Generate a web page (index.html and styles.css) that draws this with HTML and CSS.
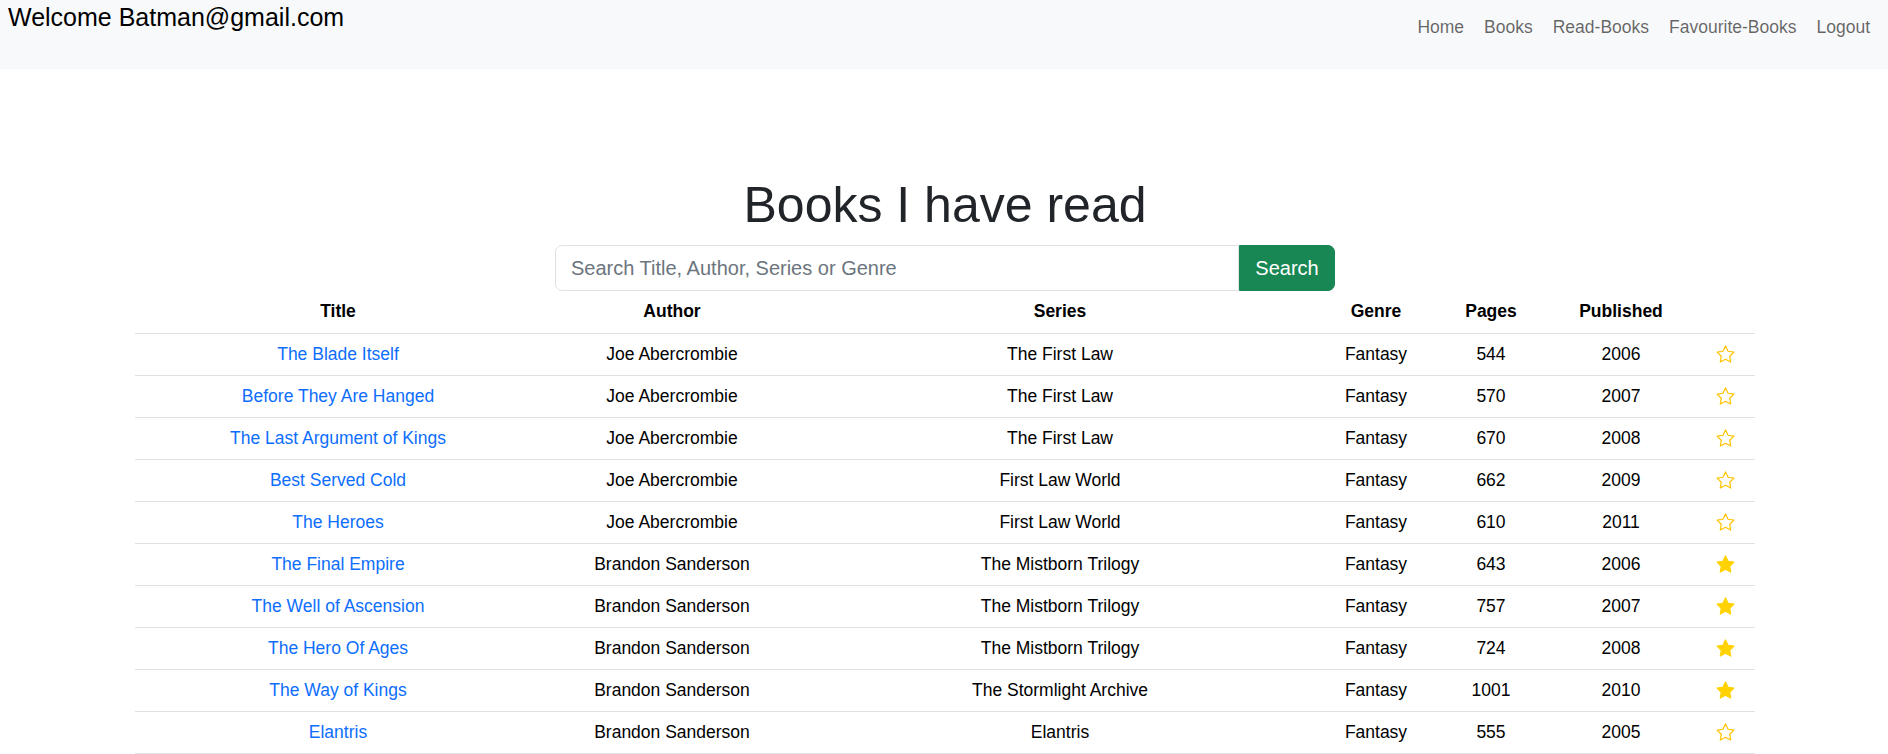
FILE: index.html
```html
<!DOCTYPE html>
<html lang="en">
<head>
<meta charset="utf-8">
<title>Books I have read</title>
<link rel="stylesheet" href="styles.css">
</head>
<body>
<svg width="0" height="0" class="defs" aria-hidden="true">
  <defs>
    <path id="star" d="M12 2.2l2.95 6.1 6.65.95-4.8 4.7 1.13 6.65L12 17.45l-5.930 3.15 1.13-6.65-4.8-4.7 6.65-.95z"/>
  </defs>
</svg>
<nav class="navbar">
  <div class="brand">Welcome Batman@gmail.com</div>
  <ul class="nav">
    <li><a href="#">Home</a></li>
    <li><a href="#">Books</a></li>
    <li><a href="#">Read-Books</a></li>
    <li><a href="#">Favourite-Books</a></li>
    <li><a href="#">Logout</a></li>
  </ul>
</nav>
<main class="main">
  <h1 class="title">Books I have read</h1>
  <form class="search">
    <input class="search-input" type="text" placeholder="Search Title, Author, Series or Genre">
    <button class="search-btn" type="button">Search</button>
  </form>
  <table class="books">
    <colgroup>
      <col class="c-title"><col class="c-author"><col class="c-series"><col class="c-genre"><col class="c-pages"><col class="c-pub"><col class="c-fav">
    </colgroup>
    <thead>
      <tr><th>Title</th><th>Author</th><th>Series</th><th>Genre</th><th>Pages</th><th>Published</th><th></th></tr>
    </thead>
    <tbody>
      <tr><td><a href="#">The Blade Itself</a></td><td>Joe Abercrombie</td><td>The First Law</td><td>Fantasy</td><td>544</td><td>2006</td><td><svg class="star" viewBox="0 0 24 24"><use href="#star"/></svg></td></tr>
      <tr><td><a href="#">Before They Are Hanged</a></td><td>Joe Abercrombie</td><td>The First Law</td><td>Fantasy</td><td>570</td><td>2007</td><td><svg class="star" viewBox="0 0 24 24"><use href="#star"/></svg></td></tr>
      <tr><td><a href="#">The Last Argument of Kings</a></td><td>Joe Abercrombie</td><td>The First Law</td><td>Fantasy</td><td>670</td><td>2008</td><td><svg class="star" viewBox="0 0 24 24"><use href="#star"/></svg></td></tr>
      <tr><td><a href="#">Best Served Cold</a></td><td>Joe Abercrombie</td><td>First Law World</td><td>Fantasy</td><td>662</td><td>2009</td><td><svg class="star" viewBox="0 0 24 24"><use href="#star"/></svg></td></tr>
      <tr><td><a href="#">The Heroes</a></td><td>Joe Abercrombie</td><td>First Law World</td><td>Fantasy</td><td>610</td><td>2011</td><td><svg class="star" viewBox="0 0 24 24"><use href="#star"/></svg></td></tr>
      <tr><td><a href="#">The Final Empire</a></td><td>Brandon Sanderson</td><td>The Mistborn Trilogy</td><td>Fantasy</td><td>643</td><td>2006</td><td><svg class="star filled" viewBox="0 0 24 24"><use href="#star"/></svg></td></tr>
      <tr><td><a href="#">The Well of Ascension</a></td><td>Brandon Sanderson</td><td>The Mistborn Trilogy</td><td>Fantasy</td><td>757</td><td>2007</td><td><svg class="star filled" viewBox="0 0 24 24"><use href="#star"/></svg></td></tr>
      <tr><td><a href="#">The Hero Of Ages</a></td><td>Brandon Sanderson</td><td>The Mistborn Trilogy</td><td>Fantasy</td><td>724</td><td>2008</td><td><svg class="star filled" viewBox="0 0 24 24"><use href="#star"/></svg></td></tr>
      <tr><td><a href="#">The Way of Kings</a></td><td>Brandon Sanderson</td><td>The Stormlight Archive</td><td>Fantasy</td><td>1001</td><td>2010</td><td><svg class="star filled" viewBox="0 0 24 24"><use href="#star"/></svg></td></tr>
      <tr><td><a href="#">Elantris</a></td><td>Brandon Sanderson</td><td>Elantris</td><td>Fantasy</td><td>555</td><td>2005</td><td><svg class="star" viewBox="0 0 24 24"><use href="#star"/></svg></td></tr>
    </tbody>
  </table>
</main>
</body>
</html>
```

FILE: styles.css
```css
* { box-sizing: border-box; }

html, body {
  margin: 0;
  padding: 0;
  background: #fff;
  font-family: "Liberation Sans", Arial, sans-serif;
  color: #212529;
}

.defs { position: absolute; width: 0; height: 0; }

.navbar {
  height: 69px;
  background: #f8f9fa;
  display: flex;
  justify-content: space-between;
  align-items: flex-start;
  padding: 0 8px;
}

.brand {
  font-size: 25px;
  line-height: 30px;
  color: #000;
  padding-top: 2px;
}

.nav {
  list-style: none;
  margin: 0;
  padding: 14px 0 0 0;
  display: flex;
}

.nav a {
  display: block;
  padding: 0 10px;
  font-size: 17.5px;
  line-height: 26px;
  color: rgba(0, 0, 0, 0.6);
  text-decoration: none;
}

.main {
  display: flex;
  flex-direction: column;
  align-items: center;
  padding-top: 106px;
  padding-left: 2px;
}

.title {
  margin: 0 0 10px 0;
  font-size: 50px;
  line-height: 60px;
  font-weight: 400;
  color: #212529;
}

.search {
  display: flex;
  width: 780px;
  height: 46px;
}

.search-input {
  flex: 1;
  height: 46px;
  border: 1px solid #dee2e6;
  border-radius: 7px 0 0 7px;
  padding: 0 15px;
  font-family: inherit;
  font-size: 20px;
  color: #212529;
  background: #fff;
  outline: none;
}

.search-input::placeholder { color: #6c757d; }

.search-btn {
  width: 96px;
  height: 46px;
  border: 1px solid #198754;
  background: #198754;
  color: #fff;
  font-family: inherit;
  font-size: 20px;
  border-radius: 0 7px 7px 0;
  padding: 0;
}

.books {
  width: 1620px;
  table-layout: fixed;
  border-collapse: collapse;
  font-size: 17.5px;
  color: #000;
}

.c-title { width: 406px; }
.c-author { width: 262px; }
.c-series { width: 514px; }
.c-genre { width: 118px; }
.c-pages { width: 112px; }
.c-pub { width: 148px; }
.c-fav { width: 60px; }

.books th,
.books td {
  height: 42px;
  padding: 0 8px;
  line-height: 26px;
  text-align: center;
  vertical-align: middle;
  border-bottom: 1px solid #dee2e6;
  white-space: nowrap;
}

.books th {
  font-weight: 700;
  padding-bottom: 1px;
}

.books a {
  color: #0d6efd;
  text-decoration: none;
}

.star {
  display: block;
  margin: 0 auto;
  width: 21px;
  height: 21px;
  fill: none;
  stroke: #ffc400;
  stroke-width: 1.4;
  stroke-linejoin: round;
}

.star.filled {
  fill: #ffd200;
  stroke: #ffd200;
}
```
